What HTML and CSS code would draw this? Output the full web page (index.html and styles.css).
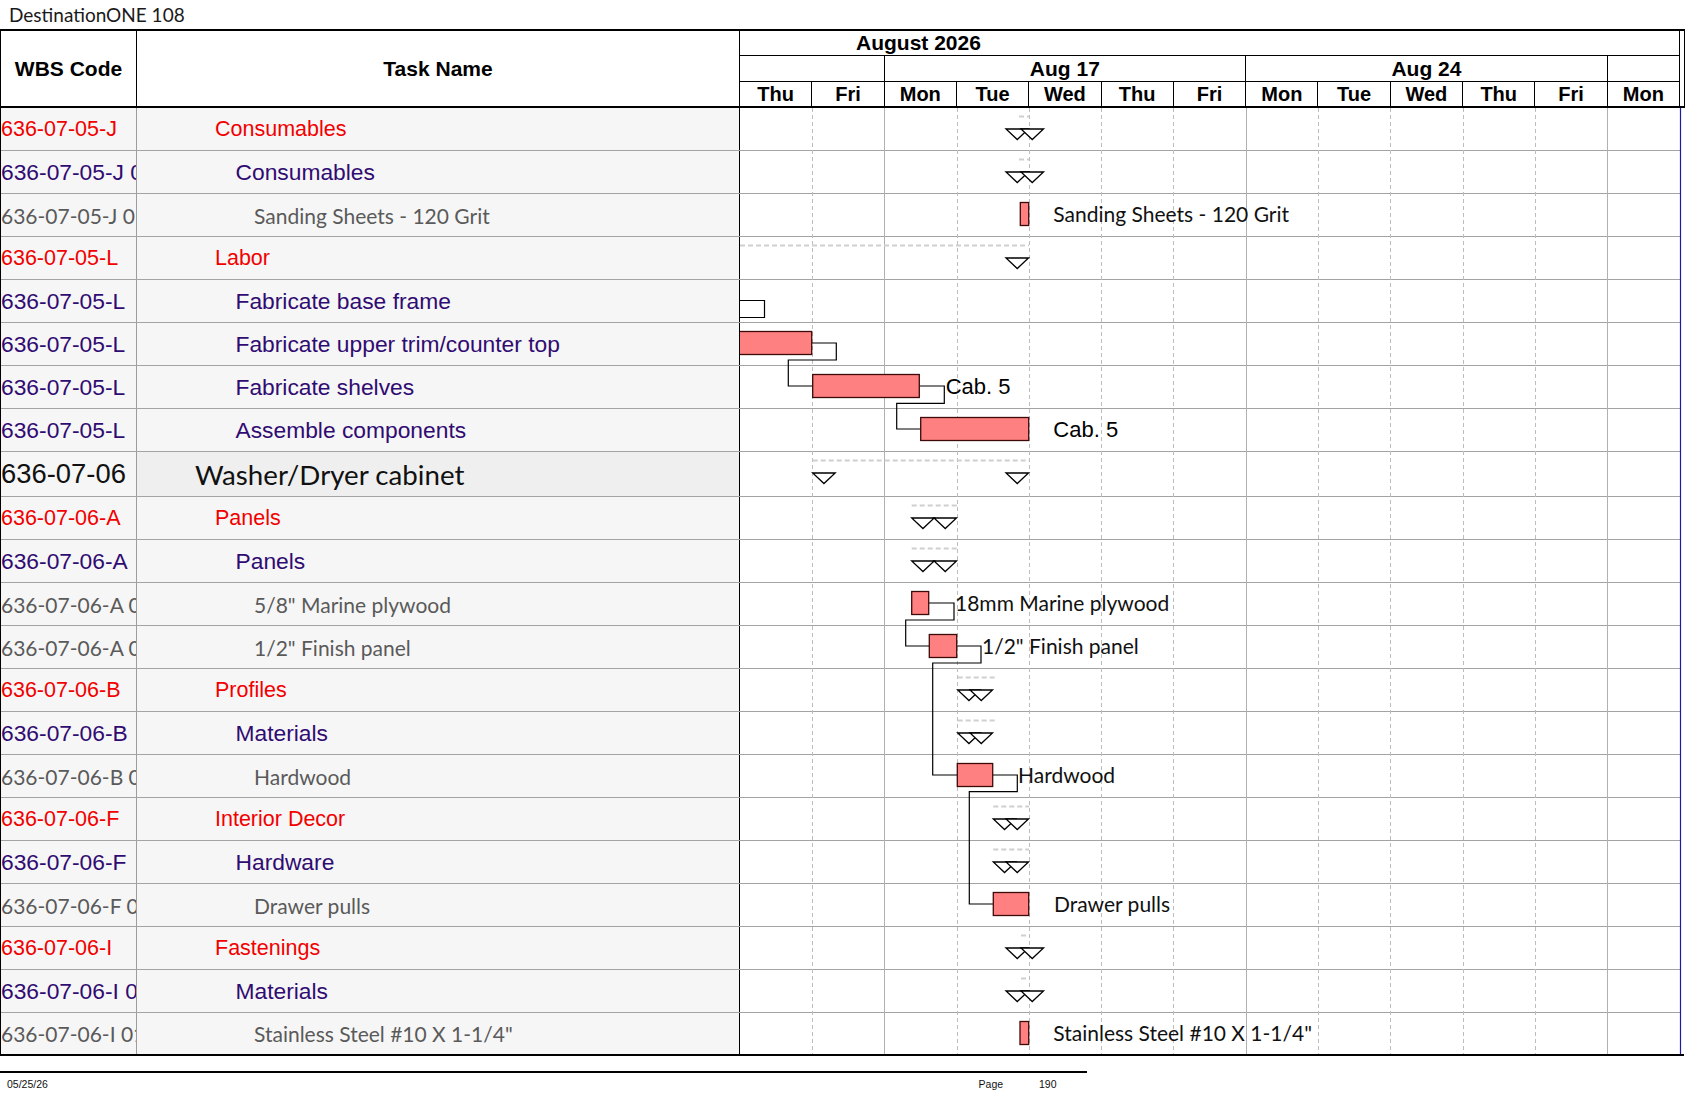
FILE: index.html
```html
<!DOCTYPE html>
<html lang="en">
<head>
<meta charset="utf-8">
<title>DestinationONE 108</title>
<link rel="stylesheet" href="styles.css">
</head>
<body>
<div class="title">DestinationONE 108</div>

<div class="head">
  <div class="hcell wbs-h">WBS Code</div>
  <div class="hcell task-h">Task Name</div>
  <div class="timescale">
    <div class="ts month">August 2026</div>
    <div class="ts span2"></div>
    <div class="ts span5">Aug 17</div>
    <div class="ts span5">Aug 24</div>
    <div class="ts"></div>
    <div class="ts day">Thu</div>
    <div class="ts day">Fri</div>
    <div class="ts day">Mon</div>
    <div class="ts day">Tue</div>
    <div class="ts day">Wed</div>
    <div class="ts day">Thu</div>
    <div class="ts day">Fri</div>
    <div class="ts day">Mon</div>
    <div class="ts day">Tue</div>
    <div class="ts day">Wed</div>
    <div class="ts day">Thu</div>
    <div class="ts day">Fri</div>
    <div class="ts day">Mon</div>
  </div>
  <div class="edge"></div>
</div>

<div class="body">
  <div class="rows">
    <div class="row l3"><div class="wbs">636-07-05-J</div><div class="name">Consumables</div></div>
    <div class="row l4"><div class="wbs">636-07-05-J 0</div><div class="name">Consumables</div></div>
    <div class="row l5"><div class="wbs">636-07-05-J 01</div><div class="name">Sanding Sheets - 120 Grit</div></div>
    <div class="row l3"><div class="wbs">636-07-05-L</div><div class="name">Labor</div></div>
    <div class="row l4"><div class="wbs">636-07-05-L</div><div class="name">Fabricate base frame</div></div>
    <div class="row l4"><div class="wbs">636-07-05-L</div><div class="name">Fabricate upper trim/counter top</div></div>
    <div class="row l4"><div class="wbs">636-07-05-L</div><div class="name">Fabricate shelves</div></div>
    <div class="row l4"><div class="wbs">636-07-05-L</div><div class="name">Assemble components</div></div>
    <div class="row l2"><div class="wbs">636-07-06</div><div class="name">Washer/Dryer cabinet</div></div>
    <div class="row l3"><div class="wbs">636-07-06-A</div><div class="name">Panels</div></div>
    <div class="row l4"><div class="wbs">636-07-06-A</div><div class="name">Panels</div></div>
    <div class="row l5"><div class="wbs">636-07-06-A 01</div><div class="name">5/8" Marine plywood</div></div>
    <div class="row l5"><div class="wbs">636-07-06-A 02</div><div class="name">1/2" Finish panel</div></div>
    <div class="row l3"><div class="wbs">636-07-06-B</div><div class="name">Profiles</div></div>
    <div class="row l4"><div class="wbs">636-07-06-B</div><div class="name">Materials</div></div>
    <div class="row l5"><div class="wbs">636-07-06-B 01</div><div class="name">Hardwood</div></div>
    <div class="row l3"><div class="wbs">636-07-06-F</div><div class="name">Interior Decor</div></div>
    <div class="row l4"><div class="wbs">636-07-06-F</div><div class="name">Hardware</div></div>
    <div class="row l5"><div class="wbs">636-07-06-F 01</div><div class="name">Drawer pulls</div></div>
    <div class="row l3"><div class="wbs">636-07-06-I</div><div class="name">Fastenings</div></div>
    <div class="row l4"><div class="wbs">636-07-06-I 0</div><div class="name">Materials</div></div>
    <div class="row l5"><div class="wbs">636-07-06-I 01</div><div class="name">Stainless Steel #10 X 1-1/4"</div></div>
  </div>

  <svg class="chart" width="944" height="946" viewBox="0 0 944 946" xmlns="http://www.w3.org/2000/svg">
    <!-- row separators -->
    <path class="hl" d="M0 42.5H941M0 85.5H941M0 128.5H941M0 171.5H941M0 214.5H941M0 257.5H941M0 300.5H941M0 343.5H941M0 388.5H941M0 431.5H941M0 474.5H941M0 517.5H941M0 560.5H941M0 603.5H941M0 646.5H941M0 689.5H941M0 732.5H941M0 775.5H941M0 818.5H941M0 861.5H941M0 904.5H941"/>
    <!-- day columns -->
    <line class="vd" x1="72.5" y1="0" x2="72.5" y2="946"/>
    <line class="vw" x1="144.5" y1="0" x2="144.5" y2="946"/>
    <line class="vd" x1="217.5" y1="0" x2="217.5" y2="946"/>
    <line class="vd" x1="289.5" y1="0" x2="289.5" y2="946"/>
    <line class="vd" x1="361.5" y1="0" x2="361.5" y2="946"/>
    <line class="vd" x1="433.5" y1="0" x2="433.5" y2="946"/>
    <line class="vw" x1="506.5" y1="0" x2="506.5" y2="946"/>
    <line class="vd" x1="578.5" y1="0" x2="578.5" y2="946"/>
    <line class="vd" x1="650.5" y1="0" x2="650.5" y2="946"/>
    <line class="vd" x1="723.5" y1="0" x2="723.5" y2="946"/>
    <line class="vd" x1="795.5" y1="0" x2="795.5" y2="946"/>
    <line class="vw" x1="867.5" y1="0" x2="867.5" y2="946"/>
    <line class="rim" x1="940.5" y1="0" x2="940.5" y2="946"/>

    <!-- summary bars (dashed) -->
    <path class="sum" d="M279 8.5H289M279 51.5H289M0 137.5H289M72.7 352.5H289M171.7 397.5H217.7M171.7 440.5H217.7M217.7 569.5H255M217.7 612.5H255M253.3 698.5H289M253.3 741.5H289M281 827.5H288M281 870.5H288"/>

    <!-- summary markers -->
    <path class="tri" d="M266 21h22.5l-11.25 10.5z"/>
    <path class="tri" d="M281 21h22.5l-11.25 10.5z"/>
    <path class="tri" d="M266 64h22.5l-11.25 10.5z"/>
    <path class="tri" d="M281 64h22.5l-11.25 10.5z"/>
    <path class="tri" d="M266 150h22.5l-11.25 10.5z"/>
    <path class="tri" d="M72.7 365h22.5l-11.25 10.5z"/>
    <path class="tri" d="M266 365h22.5l-11.25 10.5z"/>
    <path class="tri" d="M171.7 410h22.5l-11.25 10.5z"/>
    <path class="tri" d="M194 410h22.5l-11.25 10.5z"/>
    <path class="tri" d="M171.7 453h22.5l-11.25 10.5z"/>
    <path class="tri" d="M194 453h22.5l-11.25 10.5z"/>
    <path class="tri" d="M217.7 582h22.5l-11.25 10.5z"/>
    <path class="tri" d="M230 582h22.5l-11.25 10.5z"/>
    <path class="tri" d="M217.7 625h22.5l-11.25 10.5z"/>
    <path class="tri" d="M230 625h22.5l-11.25 10.5z"/>
    <path class="tri" d="M253.3 711h22.5l-11.25 10.5z"/>
    <path class="tri" d="M266 711h22.5l-11.25 10.5z"/>
    <path class="tri" d="M253.3 754h22.5l-11.25 10.5z"/>
    <path class="tri" d="M266 754h22.5l-11.25 10.5z"/>
    <path class="tri" d="M266 840h22.5l-11.25 10.5z"/>
    <path class="tri" d="M281 840h22.5l-11.25 10.5z"/>
    <path class="tri" d="M266 883h22.5l-11.25 10.5z"/>
    <path class="tri" d="M281 883h22.5l-11.25 10.5z"/>

    <!-- links -->
    <path class="link" d="M0 192.5H24.5V209.5H0"/>
    <path class="link" d="M71.7 235H96.3V252H48.3V278H72.7"/>
    <path class="link" d="M179.3 278H204.3V295.3H156.7V321H180.7"/>
    <path class="link" d="M188.7 495H214V512H165.7V538H189.3"/>
    <path class="link" d="M216.7 538H241V555H192.7V667H217.3"/>
    <path class="link" d="M252.7 667H277.3V683.7H229.3V796H253.3"/>

    <!-- task bars -->
    <rect class="bar" x="280.3" y="94.5" width="8.4" height="23"/>
    <rect class="bar" x="-3" y="223.5" width="74.7" height="23"/>
    <rect class="bar" x="72.7" y="266.5" width="106.6" height="23"/>
    <rect class="bar" x="180.7" y="309.5" width="108" height="23"/>
    <rect class="bar" x="171.7" y="483.5" width="17" height="23"/>
    <rect class="bar" x="189.3" y="526.5" width="27.4" height="23"/>
    <rect class="bar" x="217.3" y="655.5" width="35.4" height="23"/>
    <rect class="bar" x="253.3" y="784.5" width="35.4" height="23"/>
    <rect class="bar" x="280" y="913.5" width="8.7" height="23"/>

    <!-- labels -->
    <text class="lbl" x="313.3" y="114">Sanding Sheets - 120 Grit</text>
    <text class="lbl-a" x="205.7" y="285.5">Cab. 5</text>
    <text class="lbl-a" x="313.3" y="328.5">Cab. 5</text>
    <text class="lbl" x="215" y="503">18mm Marine plywood</text>
    <text class="lbl" x="242" y="546">1/2&quot; Finish panel</text>
    <text class="lbl" x="278" y="675">Hardwood</text>
    <text class="lbl" x="314" y="804">Drawer pulls</text>
    <text class="lbl" x="313.3" y="933">Stainless Steel #10 X 1-1/4&quot;</text>
  </svg>
</div>

<div class="footer">
  <span class="f-date">05/25/26</span>
  <span class="f-page">Page</span>
  <span class="f-num">190</span>
</div>
</body>
</html>
```

FILE: styles.css
```css
* {
  box-sizing: border-box;
}

body {
  margin: 0;
  background: #ffffff;
  color: #000000;
  font-family: "Liberation Sans", Arial, sans-serif;
}

/* ---------- title ---------- */
.title {
  height: 29px;
  line-height: 29px;
  padding-left: 9px;
  font-family: Lato, "Open Sans", sans-serif;
  font-weight: 400;
  font-size: 19px;
  color: #1a1a1a;
  white-space: nowrap;
}

/* ---------- header ---------- */
.head {
  display: flex;
  width: 1685px;
  height: 79px;
  border-top: 2px solid #000;
  border-bottom: 2px solid #000;
}

.hcell {
  display: flex;
  align-items: center;
  justify-content: center;
  font-weight: bold;
  font-size: 21px;
}

.wbs-h {
  width: 137px;
  border-left: 1px solid #000;
  border-right: 1px solid #000;
}

.task-h {
  width: 603px;
  border-right: 1px solid #000;
}

.timescale {
  width: 940px;
  display: grid;
  grid-template-columns: repeat(13, 1fr);
  grid-template-rows: 25px 26px 24px;
}

.ts {
  display: flex;
  align-items: center;
  justify-content: center;
  border-right: 1px solid #000;
  border-bottom: 1px solid #000;
  font-weight: bold;
  font-size: 21px;
  white-space: nowrap;
}

.month {
  grid-column: 1 / -1;
  justify-content: flex-start;
  padding-left: 116px;
}

.span2 {
  grid-column: span 2;
}

.span5 {
  grid-column: span 5;
}

.day {
  font-size: 20px;
  border-bottom: none;
}

.edge {
  width: 5px;
  border-right: 1px solid #000;
}

/* ---------- body ---------- */
.body {
  display: flex;
  width: 1684px;
  border-bottom: 2px solid #000;
}

.rows {
  width: 740px;
  border-left: 1px solid #000;
}

.row {
  display: flex;
  height: 43px;
  border-bottom: 1px solid #a3a3a3;
}

.row:last-child {
  height: 41px;
  border-bottom: none;
}

.wbs {
  width: 136px;
  display: flex;
  align-items: center;
  overflow: hidden;
  white-space: nowrap;
  border-right: 1px solid #9c9c9c;
  background: #f6f6f6;
}

.name {
  width: 603px;
  display: flex;
  align-items: center;
  overflow: hidden;
  white-space: nowrap;
  border-right: 1px solid #000;
  background: #f6f6f6;
}

/* outline levels */
.l2 {
  height: 45px;
  color: #111;
}

.l2 .wbs {
  font-size: 27.4px;
}

.l2 .name {
  padding-left: 58px;
  font-family: Lato, "Open Sans", sans-serif;
  font-size: 27.7px;
  background: #efefef;
}

.l3 {
  color: #f20000;
  font-size: 21.5px;
}

.l3 .name {
  padding-left: 78px;
}

.l4 {
  color: #300b72;
  font-size: 22.8px;
}

.l4 .name {
  padding-left: 98.5px;
}

.l5 {
  color: #5a5a5a;
  font-family: Lato, "Open Sans", sans-serif;
  font-size: 21px;
}

.l5 .name {
  padding-left: 117px;
}

/* ---------- gantt chart ---------- */
.chart {
  display: block;
  width: 944px;
  height: 946px;
  overflow: hidden;
}

.hl {
  fill: none;
  stroke: #a3a3a3;
  stroke-width: 1;
}

.vd {
  stroke: #bdbdbd;
  stroke-width: 1;
  stroke-dasharray: 4 3;
}

.vw {
  stroke: #b0b0b0;
  stroke-width: 1;
}

.rim {
  stroke: #1c1ca0;
  stroke-width: 1.2;
}

.sum {
  fill: none;
  stroke: #cfcfcf;
  stroke-width: 2;
  stroke-dasharray: 5 3;
}

.tri {
  fill: #ffffff;
  stroke: #000;
  stroke-width: 1.3;
}

.bar {
  fill: #ff8080;
  stroke: #3d0a0a;
  stroke-width: 1.3;
}

.link {
  fill: none;
  stroke: #000;
  stroke-width: 1.2;
}

.lbl {
  font-family: Lato, "Open Sans", sans-serif;
  font-size: 21px;
  fill: #111;
}

.lbl-a {
  font-family: "Liberation Sans", Arial, sans-serif;
  font-size: 22px;
  fill: #000;
}

/* ---------- footer ---------- */
.footer {
  display: flex;
  align-items: center;
  width: 1087px;
  height: 24px;
  margin-top: 15px;
  padding-left: 7px;
  border-top: 2px solid #000;
  font-size: 10.5px;
  color: #111;
}

.f-date {
  width: 971.6px;
}

.f-page {
  width: 60.4px;
}
```
